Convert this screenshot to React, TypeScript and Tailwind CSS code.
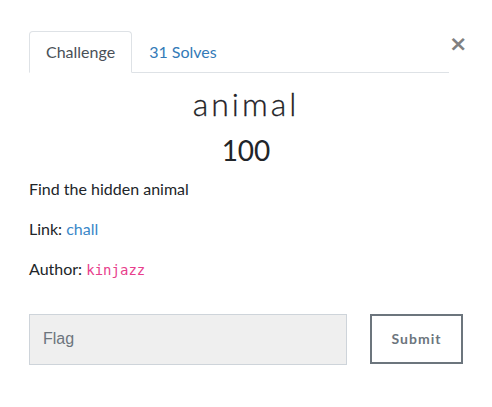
import React from "react";

export default function App() {
  return (
    <div className="min-h-[407px] w-[492px] bg-white pt-[31px] pl-[29px] text-[#212529]" style={{ fontFamily: "Lato, 'Noto Sans', sans-serif" }}>
      <div className="flex w-[434px] items-start">
        <div className="flex w-[420px] shrink-0 border-b border-[#dee2e6]">
          <div className="-mb-px flex h-[42px] items-center rounded-t-[4px] border border-[#dee2e6] border-b-white bg-white px-[16px] text-[16px] text-[#495057]">
            Challenge
          </div>
          <div className="flex h-[41px] items-center px-[17px] text-[16px] text-[#337ab7]">
            31 Solves
          </div>
        </div>
        <div className="ml-auto mr-[3px] mt-[1px] text-[22px] font-bold leading-[24px] text-[#808080]" style={{ fontFamily: "'DejaVu Sans', sans-serif" }}>
          ×
        </div>
      </div>
      <div className="w-[434px]">
        <h2 className="mt-[12px] text-center text-[32px] font-light leading-[1.2] tracking-[3px] text-[#1e2125]" style={{ WebkitTextStroke: "0.3px #1e2125" }}>animal</h2>
        <h3 className="mt-[11px] text-center text-[28px] leading-[1.2] text-[#212529]">100</h3>
        <div className="mt-[9px] text-[16px] leading-[24px]">
          <p className="mb-[16px]">Find the hidden animal</p>
          <p className="mb-[16px]">
            Link: <a className="text-[#3a87c8]">chall</a>
          </p>
          <p className="mb-[16px]">
            Author:{" "}
            <code className="text-[14px] text-[#e83e8c]" style={{ fontFamily: "'DejaVu Sans Mono', monospace" }}>
              kinjazz
            </code>
          </p>
        </div>
      </div>
      <div className="mt-[32px] flex w-[434px] items-start">
        <div className="flex h-[51px] w-[318px] items-center border border-[#ced4da] bg-[#efefef] pl-[13px] text-[16px] text-[#6c757d]" style={{ fontFamily: "'Liberation Sans', Arial, sans-serif" }}>
          Flag
        </div>
        <div className="ml-auto flex h-[50px] w-[93px] items-center justify-center border-2 border-[#6c757d] text-[14px] font-bold tracking-[1px] text-[#6c757d]">
          Submit
        </div>
      </div>
    </div>
  );
}
